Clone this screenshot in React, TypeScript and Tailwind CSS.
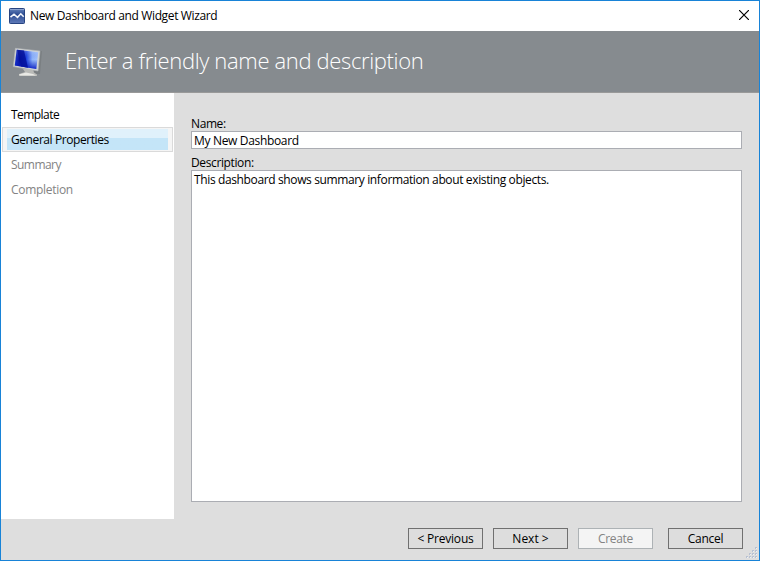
import React from 'react';

function AppIcon() {
  return (
    <svg width="16" height="16" viewBox="0 0 16 16">
      <defs>
        <linearGradient id="app" x1="0" y1="0" x2="0" y2="1">
          <stop offset="0" stopColor="#6584bd" />
          <stop offset=".4" stopColor="#2c4c92" />
          <stop offset="1" stopColor="#5f7ab8" />
        </linearGradient>
      </defs>
      <rect x=".5" y=".5" width="15" height="15" rx=".8" fill="url(#app)" stroke="#274481" />
      <path d="M1 1.5H15" stroke="#8ba3cf" />
      <path d="M1.5 9.2L5 6.2L8.5 9.4L11.8 5.8L14.7 8.8" fill="none" stroke="#f4f7fc" strokeWidth="1.6" />
    </svg>
  );
}

function MonitorIcon() {
  return (
    <svg width="32" height="32" viewBox="0 0 32 32">
      <defs>
        <linearGradient id="screen" x1="0" y1="0" x2="1" y2="0">
          <stop offset="0" stopColor="#1a37cc" />
          <stop offset=".2" stopColor="#0710a0" />
          <stop offset=".5" stopColor="#2146df" />
          <stop offset=".75" stopColor="#8fb4fa" />
          <stop offset="1" stopColor="#a6c4fc" />
        </linearGradient>
        <linearGradient id="shade" x1="0" y1="0" x2="0" y2="1">
          <stop offset="0" stopColor="#e0ecff" stopOpacity=".3" />
          <stop offset=".5" stopColor="#1230c0" stopOpacity="0" />
          <stop offset="1" stopColor="#0010c0" stopOpacity=".9" />
        </linearGradient>
      </defs>
      <path d="M27 5L30 5L28 28H20Z" fill="#73787a" opacity=".6" />
      <path d="M11 23H21L22 26.5L25 28.5V30H7V28L13 26Z" fill="#b9bab7" />
      <path d="M7 28.5L14 26.5L21 28L24 29.5H8Z" fill="#e9e9e5" />
      <path d="M3.4 2.3L28 5L26 25L1.3 20.6Z" fill="#d1d4d4" stroke="#b3b7b8" strokeWidth=".6" />
      <path d="M4.6 3.7L26.2 6.2L24.3 23.1L2.8 19.4Z" fill="url(#screen)" />
      <path d="M4.6 3.7L26.2 6.2L24.3 23.1L2.8 19.4Z" fill="url(#shade)" />
      <path d="M5 3.8L12 4.6L16 21.7L9 20.5Z" fill="#03109a" opacity=".8" />
    </svg>
  );
}

function Step({ children, className }: { children: React.ReactNode; className: string }) {
  return <div className={`flex h-[25px] items-center pl-[10px] ${className}`}>{children}</div>;
}

function WizardButton({ children, className }: { children: React.ReactNode; className: string }) {
  return (
    <button className={`flex h-[21px] w-[75px] items-center justify-center border whitespace-nowrap ${className}`}>
      {children}
    </button>
  );
}

export default function App() {
  return (
    <div className="relative flex h-[561px] w-[760px] flex-col overflow-hidden border border-[#1883d7] bg-[#dedede] font-['Open_Sans','Noto_Sans',sans-serif] text-[12px] leading-[16px] text-black">
      <header className="flex h-[30px] shrink-0 items-center bg-white pl-2">
        <AppIcon />
        <span className="ml-[5px] tracking-[-0.36px]">New Dashboard and Widget Wizard</span>
        <button aria-label="Close" className="mr-[10px] mb-[2px] ml-auto">
          <svg width="10" height="10" viewBox="0 0 10 10">
            <path d="M0 0L10 10M10 0L0 10" stroke="#000" strokeWidth="1.2" />
          </svg>
        </button>
      </header>
      <div className="flex h-[62px] shrink-0 items-start border-b border-[#999999] bg-[#868b8f] pt-[15px] pl-[11px] text-white">
        <MonitorIcon />
        <h1 className="-mt-px ml-[21px] text-[22px] leading-[30px] font-light tracking-[-0.35px]">Enter a friendly name and description</h1>
      </div>
      <div className="flex h-[426px] shrink-0">
        <nav className="w-[173px] bg-white pt-[9px]">
          <Step className="tracking-[-0.55px]">Template</Step>
          <div className="ml-px flex h-[25px] w-[171px] border border-[#dadada] bg-[#f5f5f5] px-1 py-px">
            <div className="flex flex-1 items-center bg-linear-to-b from-[#e0f1fb] from-[43%] to-[#c4e5f8] to-[43%] pl-[4px] tracking-[-0.42px]">General Properties</div>
          </div>
          <Step className="tracking-[-0.55px] text-[#838383]">Summary</Step>
          <Step className="tracking-[-0.3px] text-[#838383]">Completion</Step>
        </nav>
        <main className="flex flex-1 flex-col pt-[23px] pr-[17px] pl-[17px]">
          <label className="h-[15px] leading-[16px] tracking-[-0.4px]">Name:</label>
          <div className="h-[18px] border border-[#abadb3] bg-white pl-[2px] leading-[17px] tracking-[-0.33px]">My New Dashboard</div>
          <label className="mt-[6px] h-[15px] leading-[16px] tracking-[-0.38px]">Description:</label>
          <div className="h-[332px] border border-[#abadb3] bg-white pl-[2px] leading-[18px] tracking-[-0.37px]">This dashboard shows summary information about existing objects.</div>
        </main>
      </div>
      <footer className="flex pt-[9px] pl-[407px]">
        <WizardButton className="border-[#707070] bg-[#dddddd] tracking-[-0.2px]">&lt; Previous</WizardButton>
        <WizardButton className="ml-[10px] border-[#707070] bg-[#dddddd]">Next &gt;</WizardButton>
        <WizardButton className="ml-[10px] border-[#adb2b5] bg-[#f4f4f4] tracking-[-0.3px] text-[#838383]">Create</WizardButton>
        <WizardButton className="ml-[15px] border-[#707070] bg-[#dddddd] tracking-[-0.3px]">Cancel</WizardButton>
      </footer>
      <svg className="absolute right-px bottom-px" width="12" height="12" viewBox="0 0 12 12">
        {[[9, 0], [6, 3], [9, 3], [3, 6], [6, 6], [9, 6], [0, 9], [3, 9], [6, 9], [9, 9]].map(([x, y]) => (
          <g key={`${x}-${y}`}>
            <rect x={x} y={y} width="2" height="2" fill="#b8c1d2" />
            <rect x={x + 1} y={y + 1} width="1" height="1" fill="#eff1f5" />
          </g>
        ))}
      </svg>
    </div>
  );
}
